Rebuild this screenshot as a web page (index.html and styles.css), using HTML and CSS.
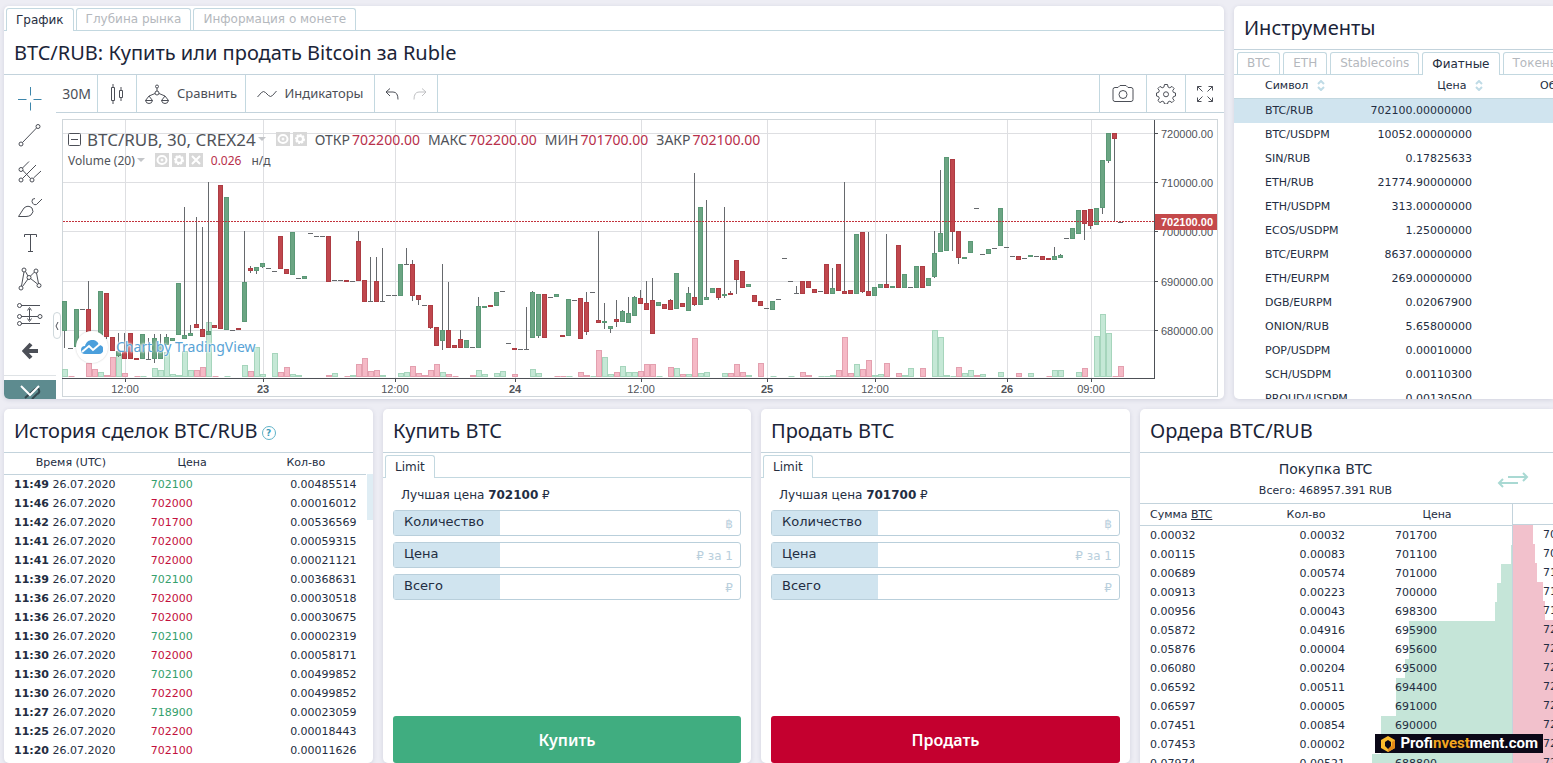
FILE: index.html
```html
<!DOCTYPE html>
<html lang="ru">
<head>
<meta charset="utf-8">
<title>BTC/RUB</title>
<link rel="stylesheet" href="styles.css">
</head>
<body>
<main class="app">
  <section class="panel market">
    <nav class="tabs">
      <button class="tab tab-active">График</button>
      <button class="tab">Глубина рынка</button>
      <button class="tab">Информация о монете</button>
    </nav>
    <h1 class="panel-title market-title">BTC/RUB: Купить или продать Bitcoin за Ruble</h1>
    <div class="chart-layout">
      <aside class="tools">
        <button class="tool" aria-label="Перекрестие"><svg class="crosshair" viewBox="0 0 24 24"><path d="M12.500 0v8.500M12.500 15.500v8M0 12.500h8.500M15.500 12.500h8"/></svg></button>
        <button class="tool" aria-label="Линия тренда"><svg viewBox="0 0 24 24"><path d="M4.500 19.500L18.500 5"/><circle cx="3" cy="21" r="2"/><circle cx="20" cy="3.500" r="2"/></svg></button>
        <button class="tool" aria-label="Вилы"><svg viewBox="0 0 24 24"><path d="M4.500 9L11 2.500M4.500 19.500L18 6M15.500 19L23 12M4.500 11l8 8.500"/><circle cx="3" cy="10.500" r="2"/><circle cx="3" cy="21" r="2"/><circle cx="14" cy="21" r="2"/></svg></button>
        <button class="tool" aria-label="Кисть"><svg viewBox="0 0 24 24"><path d="M.5 21.500L6 13q4-3.500 8 0 2.500 4-1 7-2 1.500-5 1.500zM17 3.500q-3.500 0-3 3 1 4 4.500 3L24 4"/></svg></button>
        <button class="tool" aria-label="Текст"><svg viewBox="0 0 24 24"><path d="M6.500 6V3.500h12V6M12.500 3.500v17M10 20.500h5"/></svg></button>
        <button class="tool" aria-label="Паттерн"><svg viewBox="0 0 24 24"><path d="M3.500 19L6 5M7.500 4.500L10 9M12.500 9L16.500 5M18.500 6l2 10.500M4.500 19.500L10 12M12.500 11.500L19.500 17"/><circle cx="3" cy="21" r="2"/><circle cx="6" cy="3" r="2"/><circle cx="11" cy="10.500" r="2"/><circle cx="18" cy="4" r="2"/><circle cx="21" cy="18.500" r="2"/></svg></button>
        <button class="tool" aria-label="Прогноз"><svg class="forecast" viewBox="0 0 26 24"><path d="M4 2.500h19M4 13.500h17M4 20.500h19M12.500 6v11M10.500 7.500l2-3 2 3M10.500 15.500l2 3 2-3"/><circle cx="2.500" cy="2.500" r="2"/><circle cx="2.500" cy="13.500" r="2"/><circle cx="23" cy="13.500" r="2"/><circle cx="2.500" cy="20.500" r="2"/></svg></button>
        <button class="tool" aria-label="Назад"><svg viewBox="0 0 24 24"><path class="arrow" d="M13 5L6.500 12l6.500 7M7 12H20"/></svg></button>
        <button class="tools-more" aria-label="Ещё"><svg viewBox="0 0 26 14"><path class="pencil" d="M8 13l10-9q3-2 4 1t-2 4l-5 5"/><path class="chevron" d="M4 1l9 9 9-9"/></svg></button>
        <button class="collapse" aria-label="Свернуть"><svg viewBox="0 0 6 10"><path d="M4 1L2 5l2 4"/></svg></button>
      </aside>
      <div class="chart-main">
        <div class="toolbar">
          <button class="tb interval">30M</button>
          <button class="tb candles" aria-label="Свечи"><svg width="16" height="20" viewBox="0 0 16 20"><path d="M2.500 3.500h3v13h-3zM4 0v3.500M4 16.500V20M10.500 6.500h3v7h-3zM12 3v3.500M12 13.500V17"/></svg></button>
          <button class="tb compare"><svg width="24" height="20" viewBox="0 0 24 20"><circle cx="12" cy="9" r="2"/><circle cx="12" cy="2.500" r="1.500"/><path d="M12 4v3M10 9.500L4 12M14 9.500L20 12M4 12l-3.500 4.500M4 12l3.500 4.500M.5 16.500h7q-.5 3-3.500 3t-3.500-3zM20 12l-3.500 4.500M20 12l3.500 4.500M16.500 16.500h7q-.5 3-3.500 3t-3.500-3z"/></svg>Сравнить</button>
          <button class="tb indicators"><svg width="20" height="10" viewBox="0 0 20 10"><path d="M.5 8l4-4.500q2-2 4 0l3 3q2 2 4 0l4-4.500"/></svg>Индикаторы</button>
          <div class="tb history">
            <button class="bare" aria-label="Отменить"><svg width="14" height="12" viewBox="0 0 14 12"><path d="M5 .5L1 4l4 4M1 4h7q5 0 5 7.500"/></svg></button>
            <button class="bare redo" aria-label="Повторить"><svg width="14" height="12" viewBox="0 0 14 12"><path d="M9 .5L13 4 9 8M13 4H6q-5 0-5 7.500"/></svg></button>
          </div>
          <button class="tb camera" aria-label="Снимок"><svg width="22" height="18" viewBox="0 0 22 18"><path d="M3 2.500h3L8 .5h6l2 2h3q2 0 2 2v10q0 2-2 2H3q-2 0-2-2v-10q0-2 2-2z"/><circle cx="11" cy="9.500" r="4"/></svg></button>
          <button class="tb settings" aria-label="Настройки"><svg width="20" height="20" viewBox="0 0 20 20"><path d="M8.500.5h3l.6 2.600 1.700.7 2.200-1.400 2.100 2.100-1.400 2.200.7 1.700 2.100.6v3l-2.100.6-.7 1.700 1.400 2.200-2.100 2.100-2.200-1.400-1.700.7-.6 2.100h-3l-.6-2.100-1.700-.7-2.200 1.400-2.100-2.100 1.400-2.200-.7-1.700L.5 12V9l2.100-.6.7-1.700-1.400-2.200L4 2.400l2.200 1.400 1.700-.7z"/><circle cx="10" cy="10.300" r="2.500"/></svg></button>
          <button class="tb fullscreen" aria-label="На весь экран"><svg width="18" height="18" viewBox="0 0 18 18"><path d="M1.500 5.500v-4h4M1.500 1.500l5 5M12.500 1.500h4v4M16.500 1.500l-5 5M1.500 12.500v4h4M1.500 16.500l5-5M16.500 12.500v4h-4M16.500 16.500l-5-5"/></svg></button>
        </div>
        <div class="chart">
          <svg id="plot" class="plot" viewBox="62 119 1156 278" role="img" aria-label="График BTC/RUB"></svg>
          <div class="legend">
            <div class="legend-row legend-main">
              <svg class="minus" width="13" height="13" viewBox="0 0 13 13"><rect x=".5" y=".5" width="12" height="12" rx="1"/><path d="M3 6.500h7"/></svg>
              <span>BTC/RUB, 30, CREX24</span><i class="caret"></i>
              <span class="chips"><svg class="chip"><use href="#eye"/></svg><svg class="chip"><use href="#cog"/></svg></span>
              <span class="ohlc">ОТКР<b>702200.00</b></span>
              <span class="ohlc">МАКС<b>702200.00</b></span>
              <span class="ohlc">МИН<b>701700.00</b></span>
              <span class="ohlc">ЗАКР<b>702100.00</b></span>
            </div>
            <div class="legend-row legend-volume">
              <span>Volume (20)</span><i class="caret"></i>
              <span class="chips"><svg class="chip"><use href="#eye"/></svg><svg class="chip"><use href="#cog"/></svg><svg class="chip"><use href="#cross"/></svg></span>
              <b>0.026</b><span>н/д</span>
            </div>
          </div>
          <a class="credit" href="#"><span class="credit-logo"><svg width="22" height="14" viewBox="0 0 22 14"><path class="cloud" d="M4 14a4 4 0 0 1 0-8C5 2 8 0 11 0c4 0 6 2 7 5a4.500 4.500 0 0 1 0 9z"/><path class="cut" d="M1 12l7-6 4 4 7-6"/></svg></span>Chart by TradingView</a>
        </div>
      </div>
    </div>
  </section>

  <section class="panel instruments">
    <h2 class="panel-title">Инструменты</h2>
    <nav class="tabs inst-tabs">
      <button class="tab">BTC</button>
      <button class="tab">ETH</button>
      <button class="tab">Stablecoins</button>
      <button class="tab tab-active">Фиатные</button>
      <button class="tab">Токены</button>
    </nav>
    <table class="inst-table">
      <thead><tr><th>Символ <svg class="sort"><use href="#sort"/></svg></th><th class="num">Цена <svg class="sort"><use href="#sort"/></svg></th><th class="vol">Объем</th></tr></thead>
      <tbody id="instruments"></tbody>
    </table>
  </section>

  <section class="panel trades">
    <h2 class="panel-title">История сделок BTC/RUB<button class="help" aria-label="Справка">?</button></h2>
    <div class="trades-scroll">
      <table class="trades-table">
        <thead><tr><th class="c-time">Время (UTC)</th><th class="c-price">Цена</th><th>Кол-во</th></tr></thead>
        <tbody id="trades"></tbody>
      </table>
      <span class="thumb"></span>
    </div>
  </section>

  <section class="panel deal">
    <h2 class="panel-title">Купить BTC</h2>
    <nav class="tabs"><button class="tab tab-active">Limit</button></nav>
    <form class="deal-form">
      <p class="best">Лучшая цена <strong>702100</strong> ₽</p>
      <div class="field"><label for="buy-qty">Количество</label><input id="buy-qty" placeholder="฿"></div>
      <div class="field"><label for="buy-price">Цена</label><input id="buy-price" placeholder="₽ за 1"></div>
      <div class="field"><label for="buy-total">Всего</label><input id="buy-total" placeholder="₽"></div>
      <button type="button" class="submit buy">Купить</button>
    </form>
  </section>

  <section class="panel deal">
    <h2 class="panel-title">Продать BTC</h2>
    <nav class="tabs"><button class="tab tab-active">Limit</button></nav>
    <form class="deal-form">
      <p class="best">Лучшая цена <strong>701700</strong> ₽</p>
      <div class="field"><label for="sell-qty">Количество</label><input id="sell-qty" placeholder="฿"></div>
      <div class="field"><label for="sell-price">Цена</label><input id="sell-price" placeholder="₽ за 1"></div>
      <div class="field"><label for="sell-total">Всего</label><input id="sell-total" placeholder="₽"></div>
      <button type="button" class="submit sell">Продать</button>
    </form>
  </section>

  <section class="panel orders">
    <h2 class="panel-title">Ордера BTC/RUB</h2>
    <div class="orders-head">
      <div class="orders-sum"><h3>Покупка BTC</h3><p>Всего: 468957.391 RUB</p></div>
      <button class="swap" aria-label="Поменять местами"><svg width="32" height="16" viewBox="0 0 32 16"><path d="M11 5h19M26 1l4 4-4 4M21 11H2M6 7l-4 4 4 4"/></svg></button>
    </div>
    <div class="book">
      <table class="bids">
        <thead><tr><th class="b-sum">Сумма <a href="#">BTC</a></th><th class="b-qty">Кол-во</th><th>Цена</th></tr></thead>
        <tbody id="bids"></tbody>
      </table>
      <div class="asks"><div class="asks-head"></div><ol id="asks"></ol></div>
    </div>
  </section>
</main>

<a class="watermark" href="#"><svg width="16" height="16" viewBox="0 0 16 16"><path class="hex" d="M8 0l7 4v8l-7 4-7-4V4z"/><path class="shade" d="M15 4v8l-7 4v-4l4-2V6z"/><path class="hole" d="M8 4l3 2v4l-3 3-3-3V6z"/></svg><span>Prof<em>invest</em>ment.com</span></a>

<svg class="defs" width="0" height="0">
  <symbol id="eye" viewBox="0 0 14 14"><rect width="14" height="14"/><ellipse cx="7" cy="7" rx="4.500" ry="4"/><circle class="dot" cx="7" cy="7" r="1"/></symbol>
  <symbol id="cog" viewBox="0 0 14 14"><rect width="14" height="14"/><circle class="teeth" cx="7" cy="7" r="4"/><circle cx="7" cy="7" r="3"/></symbol>
  <symbol id="cross" viewBox="0 0 14 14"><rect width="14" height="14"/><path d="M3 3l8 8M11 3l-8 8"/></symbol>
  <symbol id="sort" viewBox="0 0 8 11"><path d="M1 4l3-3 3 3M1 7l3 3 3-3"/></symbol>
</svg>
<script src="app.js"></script>
</body>
</html>
```
FILE: styles.css
```css
* { box-sizing: border-box; }
html, body { height: 100%; }
body {
  margin: 0;
  overflow: hidden;
  background: #ededf4;
  color: #232d42;
  font: 11px/19px "DejaVu Sans", sans-serif;
}
button, input { font: inherit; color: inherit; }
button { margin: 0; padding: 0; border: 0; background: none; cursor: pointer; }
h1, h2, h3, p, ol { margin: 0; padding: 0; }
table { border-collapse: collapse; border-spacing: 0; table-layout: fixed; }
th { font-weight: 400; padding: 0; }
td { padding: 0; white-space: nowrap; }
svg { fill: none; stroke: #4c4f57; }
.defs { position: absolute; }

.app {
  display: grid;
  grid-template-columns: 369fr 368fr 369fr 84fr 319fr;
  grid-template-rows: auto minmax(0, 1fr);
  gap: 10px;
  height: 100vh;
  padding: 6px 0 0 4px;
}
.panel {
  min-width: 0;
  overflow: hidden;
  background: #fff;
  border-radius: 5px;
  box-shadow: 0 1px 4px rgba(70, 75, 110, .16);
}
.market { grid-column: 1 / 5; }
.instruments { height: 0; min-height: 100%; border-radius: 5px 0 0 5px; }
.orders { grid-column: 4 / 6; border-radius: 5px 0 0 0; }

.panel-title {
  padding: 1px 10px 0;
  border-bottom: 1px solid #c3d3dc;
  color: #1b2438;
  font-family: "Noto Sans", sans-serif;
  font-size: 20px;
  font-weight: 400;
  line-height: 42px;
  white-space: nowrap;
}

.tabs {
  display: flex;
  gap: 2px;
  height: 25px;
  padding: 2px 2px 0;
  border-bottom: 1px solid #c3d8e0;
}
.tab {
  height: 22px;
  padding: 0 9px;
  border: 1px solid #c3d8e0;
  border-bottom: 0;
  border-radius: 3px 3px 0 0;
  background: #fff;
  color: #b4b8bd;
  font-size: 12px;
  white-space: nowrap;
}
.tab-active { height: 23px; color: #262e3f; }

/* Chart */
.chart-layout { display: flex; }
.tools {
  position: relative;
  display: flex;
  flex-direction: column;
  width: 52px;
  padding-top: 6px;
}
.tool { display: grid; place-items: center; height: 36px; }
.tool svg { width: 24px; height: 24px; }
.tool .forecast { width: 26px; }
.crosshair { stroke: #3d86ab; }
.arrow { stroke-width: 4; }
.tools-more {
  display: grid;
  place-items: end center;
  height: 19px;
  margin-top: auto;
  background: #5d8b8f;
  box-shadow: 0 -4px #fff, 0 -5px #dfe3e6;
}
.tools-more svg { width: 26px; height: 14px; }
.chevron { stroke: #fff; stroke-width: 2; }
.pencil { stroke: #34484f; stroke-width: 2; }
.collapse {
  position: absolute;
  right: -5px;
  top: 237px;
  width: 8px;
  height: 27px;
  border: 1px solid #cfd8dc;
  border-radius: 4px;
  background: #fff;
  z-index: 1;
}
.collapse svg { display: block; width: 6px; height: 10px; }
.chart-main { flex: 1; min-width: 0; }
.toolbar {
  display: flex;
  height: 38px;
  border-bottom: 1px solid #c3d3dc;
  color: #4c4f57;
  font-family: "Noto Sans", sans-serif;
  font-size: 13px;
}
.tb {
  display: flex;
  align-items: center;
  justify-content: center;
  gap: 8px;
  border-right: 1px solid #c3d8e0;
}
.interval { width: 42px; font-size: 14px; }
.candles { width: 39px; }
.compare { width: 109px; }
.indicators { width: 129px; }
.history { width: 63px; gap: 14px; }
.bare { display: flex; }
.redo { opacity: .35; }
.camera { width: 48px; margin-left: auto; border-left: 1px solid #c3d8e0; }
.settings { width: 39px; }
.fullscreen { width: 38px; border-right: 0; }
.chart { position: relative; margin: 6px 6px 2px; }
.plot { display: block; width: 100%; height: auto; }
.plot text {
  stroke: none;
  fill: #505359;
  font: 11px "Liberation Sans", sans-serif;
}
.plot .day, .plot .last-text { font-weight: 700; }
.plot .last-text { fill: #fff; }
.plot .time { text-anchor: middle; }
.frame { stroke: #cfd6da; }
.grid { stroke: #dedfe2; }
.axis { stroke: #4d5056; }
.wick { stroke: #66696d; }
.up { fill: #6ba583; stroke: #5b9876; }
.down { fill: #c0474d; stroke: #ad3c43; }
.vol-up { fill: #c5e8d6; stroke: #a6d5bc; }
.vol-down { fill: #f5b9c6; stroke: #e3a0af; }
.last-line { stroke: #c2323c; stroke-dasharray: 2 1; }
.last-tag { fill: #c4494b; stroke: none; }

.legend {
  position: absolute;
  top: 10px;
  left: 6px;
  color: #505359;
  font-family: "Noto Sans", sans-serif;
}
.legend-row { display: flex; align-items: center; white-space: nowrap; }
.legend-row b { color: #b8304b; font-weight: 400; }
.legend-main { height: 20px; font-size: 17px; }
.legend-volume { height: 22px; font-size: 12px; }
.legend-volume b { margin-right: 10px; }
.minus { margin-right: 6px; }
.caret { margin: 0 10px 0 2px; border: 4px solid transparent; border-top-color: #c4c6c9; border-bottom: 0; }
.chips { display: flex; gap: 3px; margin-right: 8px; }
.chip { width: 14px; height: 14px; }
.ohlc { display: flex; gap: 2px; margin-right: 8px; font-size: 14px; }
symbol rect { fill: #d8d8d8; stroke: none; }
symbol ellipse, symbol circle, #cross path { stroke: #fff; stroke-width: 2; }
symbol .dot { fill: #fff; stroke-width: 1; }
symbol .teeth { stroke-dasharray: 2 1; }
#sort path { stroke: #bfdbe6; stroke-width: 2; }

.credit {
  position: absolute;
  left: 14px;
  bottom: 34px;
  display: flex;
  align-items: center;
  gap: 8px;
  color: #58a3d6;
  font: 14px/32px "Noto Sans", sans-serif;
  text-decoration: none;
  text-shadow: 0 0 2px #fff, 0 0 2px #fff, 0 0 3px #fff;
}
.credit-logo {
  display: grid;
  place-items: center;
  width: 32px;
  height: 32px;
  border-radius: 50%;
  background: #fff;
  box-shadow: 0 0 2px rgba(0, 0, 0, .2);
}
.cloud { fill: #4b9fdc; stroke: none; }
.cut { stroke: #fff; stroke-width: 2; }

/* Instruments */
.inst-tabs { gap: 3px; padding: 2px 0 0 3px; }
.inst-tabs .tab { flex: none; }
.inst-table { width: 390px; line-height: 24px; }
.inst-table th { height: 23px; line-height: 22px; text-align: left; border-bottom: 1px solid #c3d8e0; }
.inst-table th:first-child, .inst-table td:first-child { width: 110px; padding-left: 31px; }
.inst-table .num { width: 128px; text-align: right; }
.inst-table th.num { width: 139px; padding-right: 0; }
.inst-table td.num { padding-right: 11px; }
.inst-table th.vol { padding-left: 57px; }
.inst-table tr.selected { background: #d0e4ef; }
.sort { width: 8px; height: 11px; margin-left: 5px; vertical-align: -2px; }

/* Trades */
.trades, .deal, .orders { display: flex; flex-direction: column; }
.trades-scroll { position: relative; flex: 1; min-height: 0; overflow: hidden; }
.trades-table { width: 98%; }
.trades-table th { height: 21px; border-bottom: 1px solid #c3d3dc; line-height: 20px; }
.trades-table td { padding: 1px 0 0 10px; line-height: 18px; }
.trades-table .c-time { width: 37%; }
.trades-table .c-price { width: 30%; }
.trades-table td.price { padding-left: 13px; }
.trades-table td.qty { padding-right: 9px; text-align: right; }
.gain { color: #35a06c; }
.loss { color: #c3103c; }
.thumb { position: absolute; top: 21px; right: 0; width: 6px; height: 46px; background: #dfedf4; }
.help {
  width: 14px;
  height: 14px;
  margin-left: 4px;
  border: 1px solid #62b3c8;
  border-radius: 50%;
  color: #3f9dba;
  font: 700 9px/12px "DejaVu Sans", sans-serif;
  vertical-align: 2px;
}

/* Deal forms */
.deal-form {
  display: flex;
  flex: 1;
  flex-direction: column;
  gap: 6px;
  padding: 9px 10px 0;
}
.best { padding: 0 8px; font-size: 12px; line-height: 17px; }
.field { display: flex; height: 26px; border: 1px solid #b9cfdb; border-radius: 3px; }
.field label { width: 106px; padding-left: 10px; background: #d0e4ef; font-size: 13px; line-height: 22px; }
.field input { flex: 1; min-width: 0; padding: 2px 7px 0; border: 0; outline: 0; background: none; font-size: 12px; text-align: right; }
.field input::placeholder { color: #b9cfdd; opacity: 1; }
.submit {
  height: 47px;
  margin-top: auto;
  border-radius: 3px;
  color: #fff;
  font: 600 16px "Noto Sans", sans-serif;
}
.buy { background: #40ad80; }
.sell { background: #c4002f; }

/* Order book */
.orders-head { display: flex; align-items: center; border-bottom: 1px solid #c3d3dc; }
.orders-sum { width: 357px; padding: 4px 0 2px 14px; text-align: center; }
.orders-sum h3 { font-size: 14px; font-weight: 400; line-height: 24px; }
.orders-sum p { line-height: 20px; }
.swap { padding-top: 4px; }
.swap svg { display: block; stroke: #a9d9d3; stroke-width: 2; }
.book { display: flex; flex: 1; min-height: 0; overflow: hidden; }
.bids { width: 372px; height: 0; }
.bids th { height: 21px; padding-top: 2px; border-bottom: 1px solid #c3d3dc; line-height: 18px; }
.bids a { color: inherit; }
.bids .b-sum { width: 110px; padding-left: 10px; text-align: left; }
.bids .b-qty { width: 112px; }
.bids td { height: 19px; padding: 0 0 0 10px; }
.bids td.qty { padding: 0 17px 0 0; text-align: right; }
.bids td.price {
  padding-left: 33px;
  background: linear-gradient(#c5e5d8, #c5e5d8) right / var(--depth) 100% no-repeat;
}
.asks { flex: 1; min-width: 0; border-left: 1px solid #c3d3dc; }
.asks-head { height: 21px; border-bottom: 1px solid #c3d3dc; }
.asks ol { list-style: none; }
.asks li {
  padding-left: 30px;
  background: linear-gradient(#f2c1cc, #f2c1cc) left / var(--depth) 100% no-repeat;
}

.watermark {
  position: fixed;
  right: 10px;
  bottom: 10px;
  display: flex;
  align-items: center;
  gap: 4px;
  height: 19px;
  padding: 0 5px;
  background: #0b0817;
  color: #fff;
  font: 700 15px/19px Roboto, sans-serif;
  text-decoration: none;
}
.watermark em { color: #f2a51f; font-style: normal; }
.hex { fill: #fbbc2c; stroke: none; }
.shade { fill: #e48a17; stroke: none; }
.hole { fill: #0b0817; stroke: none; }
```
FILE: app.js
```js
// Candles: slot, kind (u up, d down, n flat), body top, body bottom, wick top, wick bottom.
const candles = `0u301,331,301,348 1n348 2u309,347 3n309 4d309,347,281,347 6u291,340 7d293,337,293,339 8d337,351
9u351,356,333,357 10d351,359,333,359 11d333,359 12d358,360 13u334,359 14n359,338 15u338,359,334,363 16u345,359,334,359 17u337,345,334,345 18u338,341
19u283,335 20u335,339,207,339 21u333,336,325,336 22d324,328,217,328 23d329,337,227,337 24u331,335,182,335 25d325,328
26d185,329 27u197,330 28n330 29d328,330 30u282,322,231,322 31d268,271,266,273 32u267,271,267,274 33u263,267,263,268
34n268 35n271 36d236,269 37d269,274 38u232,275 39n278 40u276,279 41n233 42n236 43n236 44d236,282 45n280 46n280 47d280,282 48n281
49d241,281,231,281 50d280,302 51n301,257 52d281,302,257,302 53n301,248 54n295 55n295 56u264,296 57n264,248 58d264,296,260,301
59d295,300,295,305 60n305 61d305,328,305,329 62d327,346 63u330,341,264,350 64d330,348,282,348 65d345,348 66d339,348,330,348 67u340,348
68n347 69u306,348,297,348 70u306,308 71d305,307 72u292,306 73n291 74n343 75d348,350 76n349 77n349,307 78u292,338,291,338
79u294,336,294,338 80d294,338 81n297 82u294,297 83d335,337 84u299,336 85n300 86d298,339 87d302,332,292,335 88n292
89d320,323,231,323 90u321,323,303,329 91u326,329,326,333 92d319,322,300,327 93u311,322,310,322 94u313,323,297,323
95u297,316,296,316 96d298,304,290,304 97d303,310,281,310 98d300,334,278,334 99u302,306 100d304,309 101d300,310,299,310
102u273,309 103d303,307 104u293,311,287,311 105d297,305,173,306 106u207,305 107u297,300,200,300 108u288,293 109d288,298,288,300
110u294,296,207,298 111d293,295,291,295 112d260,280,260,294 113d271,288 114u284,287 115d295,302 116d301,306 117n308
118u301,310 119n299 120n258 121n281 122n293,286 123d281,294 124d281,288 125d289,293 126n291 127d264,294 128u288,294,268,294
129d264,291 130d291,294,182,294 131d290,294 132u234,294 133d232,292,232,293 134d291,296,232,296 135u287,296 136u284,288
137d284,288,234,288 138u286,288 139d245,288 140u274,288 141n287 142u266,288 143d266,288 144u278,286 145u253,277,231,278
146u233,252,170,252 147u157,251 148d159,232,159,251 149d231,258,231,264 150u257,259 151u241,253 152n208 153n254 154u249,254
155n248 156u208,246 157n247 158n256 159d256,260 160n258 161u255,257 162n256 163d256,260 164d258,260 165u256,260,247,260
166u255,258,254,258 167n238 168u228,239 169u210,234 170d210,224,210,240 171d209,226,209,229 172u208,225 173u160,208,160,214
174u133,161,133,163 175d133,139,133,221 176n222`;

// Volumes: slot, kind, bar height.
const volumes = `0u8 1d1 4d14 5d8 6u5 7d2 8d20 9u23 10d4 12d1 13u1 15u9 16u7 17u25 18u3 19u2 20u26 21u7 22d7 23d10 24u55 25d1 27u1
30u12 31d6 32u30 33u3 35u24 36d5 37d10 38u3 39u2 44d2 45u4 47d1 48u2 49d13 50d19 51d6 52d7 53u2 56u4 57u5 58d11 59d4 60d2 61d7
62d13 63u5 64d3 65d1 68d2 69u7 70u3 72u4 73u6 75d3 78u8 79u4 82d1 83d1 84u1 86d5 87d2 88u1 89d27 90u20 91u3 92d5 93u11 94u5 95u5 96d6
97d13 98d13 99u1 101d10 102u9 103d3 104u3 105d39 106u4 107u5 110u4 111d4 112d13 113d5 114u2 116d14 118u1 121u1 123d5 124d2 126u1 127u1
128u2 129d7 130d40 131d4 132u13 133d8 134d17 135u2 136u3 137d14 139d4 140u2 141u9 143d9 145u47 146u40 147u2 148u1 149d10 150u4
151u7 152d2 153u3 156u5 159d4 161u4 164d1 165u7 166u7 169u5 170d9 172u41 173u63 174u44 175d1 176d11`;

const parse = text => text.trim().split(/\s+/).map(item => {
  const [, slot, kind, rest] = item.match(/^(\d+)([udn])(.+)$/);
  return { x: 64.5 + 6 * slot, kind, v: rest.split(',').map(Number) };
});
const line = (x1, y1, x2, y2, cls) => `<line class="${cls}" x1="${x1}" y1="${y1}" x2="${x2}" y2="${y2}"/>`;
const rect = (x, y, w, h, cls) => `<rect class="${cls}" x="${x}" y="${y}" width="${w}" height="${h}"/>`;

const out = [rect(62.5, 119.5, 1155, 277, 'frame')];
const times = [[125, '12:00'], [263, '23'], [395, '12:00'], [515, '24'], [641, '12:00'], [767, '25'], [875, '12:00'], [1007, '26'], [1091, '09:00']];
const prices = [[133, '720000.00'], [182, '710000.00'], [231, '700000.00'], [281, '690000.00'], [330, '680000.00']];
times.forEach(([x]) => out.push(line(x + .5, 120, x + .5, 378, 'grid')));
prices.forEach(([y]) => out.push(line(63, y + .5, 1154, y + .5, 'grid')));
parse(volumes).forEach(({ x, kind, v }) => {
  const cls = kind === 'u' ? 'vol-up' : 'vol-down';
  out.push(v[0] > 1 ? rect(x - 2, 377.5 - v[0], 5, v[0] - 1, cls) : line(x - 2, 376.5, x + 4, 376.5, cls));
});
parse(candles).forEach(({ x, kind, v }) => {
  if (kind === 'n') {
    out.push(line(x - 2.5, v[0] + .5, x + 2.5, v[0] + .5, 'wick'));
    if (v[1]) out.push(line(x, v[1], x, v[0], 'wick'));
    return;
  }
  if (v.length > 2) out.push(line(x, v[2], x, v[3], 'wick'));
  out.push(rect(x - 2, v[0] + .5, 4, v[1] - v[0] - 1, kind === 'u' ? 'up' : 'down'));
});
out.push(line(63, 221.5, 1154, 221.5, 'last-line'));
out.push(line(62, 378.5, 1154, 378.5, 'axis'), line(1154.5, 120, 1154.5, 379, 'axis'));
times.forEach(([x, label]) => out.push(line(x + .5, 379, x + .5, 382, 'axis'),
  `<text class="time${label.length === 2 ? ' day' : ''}" x="${x}" y="393">${label}</text>`));
prices.forEach(([y, label]) => out.push(line(1155, y + .5, 1158, y + .5, 'axis'), `<text x="1161" y="${y + 5}">${label}</text>`));
out.push(rect(1155, 214, 62, 16, 'last-tag'), '<text class="last-text" x="1161" y="226">702100.00</text>');
document.getElementById('plot').innerHTML = out.join('');

const fill = (id, rows, render) => { document.getElementById(id).innerHTML = rows.map(render).join(''); };

fill('instruments', [['BTC/RUB', '702100.00000000'], ['BTC/USDPM', '10052.00000000'], ['SIN/RUB', '0.17825633'],
  ['ETH/RUB', '21774.90000000'], ['ETH/USDPM', '313.00000000'], ['ECOS/USDPM', '1.25000000'], ['BTC/EURPM', '8637.00000000'],
  ['ETH/EURPM', '269.00000000'], ['DGB/EURPM', '0.02067900'], ['ONION/RUB', '5.65800000'], ['POP/USDPM', '0.00010000'],
  ['SCH/USDPM', '0.00110300'], ['PROUD/USDPM', '0.00130500']],
  ([name, price], i) => `<tr${i ? '' : ' class="selected"'}><td>${name}</td><td class="num">${price}</td><td></td></tr>`);

fill('trades', [['11:49', 702100, '0.00485514', 1], ['11:46', 702000, '0.00016012'], ['11:42', 701700, '0.00536569'],
  ['11:41', 702000, '0.00059315'], ['11:41', 702000, '0.00021121'], ['11:39', 702100, '0.00368631', 1],
  ['11:36', 702000, '0.00030518'], ['11:36', 702000, '0.00030675'], ['11:30', 702100, '0.00002319', 1],
  ['11:30', 702000, '0.00058171'], ['11:30', 702100, '0.00499852', 1], ['11:30', 702200, '0.00499852'],
  ['11:27', 718900, '0.00023059', 1], ['11:25', 702200, '0.00018443'], ['11:20', 702100, '0.00011626']],
  ([time, price, qty, up]) => `<tr><td><strong>${time}</strong> 26.07.2020</td><td class="price ${up ? 'gain' : 'loss'}">${price}</td><td class="qty">${qty}</td></tr>`);

fill('bids', [['0.00032', '0.00032', 701700, 0], ['0.00115', '0.00083', 701100, 1], ['0.00689', '0.00574', 701000, 11],
  ['0.00913', '0.00223', 700000, 15], ['0.00956', '0.00043', 698300, 17], ['0.05872', '0.04916', 695900, 103],
  ['0.05876', '0.00004', 695600, 103], ['0.06080', '0.00204', 695000, 107], ['0.06592', '0.00511', 694400, 116],
  ['0.06597', '0.00005', 691000, 116], ['0.07451', '0.00854', 690000, 131], ['0.07453', '0.00002', 690000, 131],
  ['0.07974', '0.00521', 688800, 140]],
  ([sum, qty, price, depth]) => `<tr><td>${sum}</td><td class="qty">${qty}</td><td class="price" style="--depth:${depth}px">${price}</td></tr>`);

fill('asks', [[70, 20], [70, 22], [71, 24], [71, 30], [71, 32], [72, 60], [72, 60], [72, 60], [72, 60], [72, 60], [72, 60], [72, 60], [72, 60]],
  ([price, depth]) => `<li style="--depth:${depth}px">${price}</li>`);
```
